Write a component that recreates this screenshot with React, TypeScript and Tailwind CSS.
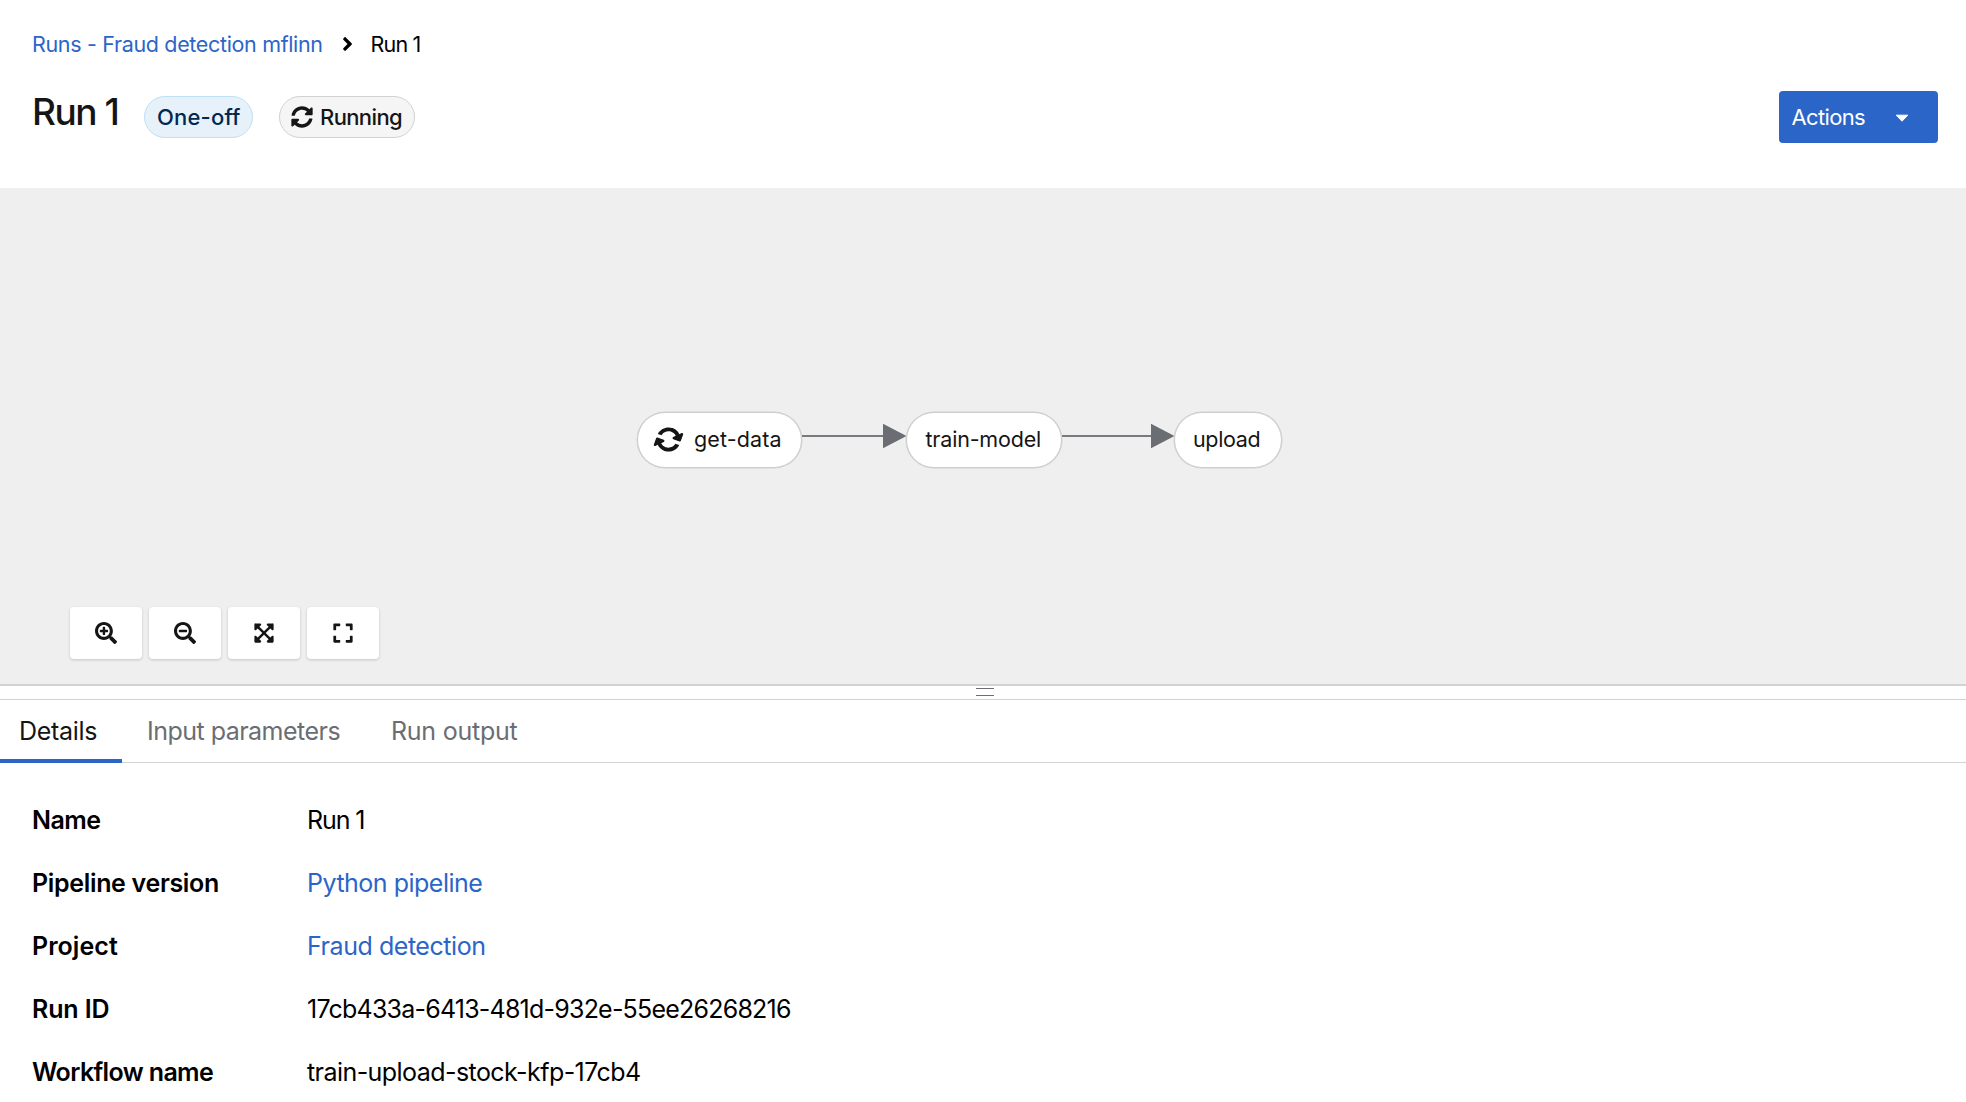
import type { ReactNode } from "react";
import { FaAngleRight, FaExpand, FaExpandArrowsAlt, FaSearchMinus, FaSearchPlus, FaSyncAlt } from "react-icons/fa";

function GraphNode({ className, children }: { className: string; children: ReactNode }) {
  return (
    <div className={`absolute top-[224px] flex h-[56px] items-center rounded-[28px] border border-[#cdcdcd] bg-white pb-[2px] text-[21.5px] whitespace-nowrap text-[#151515] shadow-[0_0_0_0.5px_#d2d2d2] ${className}`}>
      {children}
    </div>
  );
}

function Edge({ className, length }: { className: string; length: number }) {
  return (
    <svg className={`absolute top-[235px] h-[26px] ${className}`} viewBox={`0 0 ${length} 26`} fill="#6a6e73">
      <rect x="0" y="12.1" width={length - 20} height="1.8" />
      <path d={`M${length - 23.5} 0.7 L${length} 13 L${length - 23.5} 25.3 Z`} />
    </svg>
  );
}

function ToolButton({ label, children }: { label: string; children: ReactNode }) {
  return (
    <button aria-label={label} className="flex h-[52px] w-[72px] items-center justify-center rounded-[4px] bg-white text-[22px] text-[#151515] shadow-[0_1px_3px_rgba(3,3,3,0.18)]">
      {children}
    </button>
  );
}

function Row({ label, labelClass, value, valueClass }: { label: string; labelClass: string; value: string; valueClass: string }) {
  return (
    <div className="flex h-[63px] items-start">
      <dt className={`w-[275px] shrink-0 font-semibold ${labelClass}`}>{label}</dt>
      <dd className={`whitespace-nowrap ${valueClass}`}>{value}</dd>
    </div>
  );
}

export default function App() {
  return (
    <div className="flex h-[1102px] w-[1966px] flex-col overflow-hidden bg-white font-['Inter',sans-serif] text-black">
      <header className="flex h-[188px] shrink-0 flex-col pt-[30px] pr-[28px] pl-[32px]">
        <nav className="flex h-[28px] items-center text-[21.5px] leading-[28px] whitespace-nowrap">
          <a className="w-[309.5px] tracking-[-0.34px] text-[#2b65c8]">Runs - Fraud detection mflinn</a>
          <FaAngleRight className="h-[22px] w-[11px]" />
          <span className="ml-[18px] tracking-[-0.8px]">Run 1</span>
        </nav>
        <div className="mt-[29px] flex items-start">
          <h1 className="w-[112px] text-[37px] leading-[49px] font-medium tracking-[-1.46px] whitespace-nowrap text-[#151515]">Run 1</h1>
          <span className="mt-[9px] flex h-[42px] w-[109px] items-center rounded-full border border-[#bee1f4] bg-[#e7f1fa] pl-[12px] text-[22px] font-medium tracking-[0.18px] text-[#002952]">One-off</span>
          <span className="mt-[9px] ml-[26px] flex h-[42px] w-[136px] items-center rounded-full border border-[#d2d2d2] bg-[#f5f5f5] pl-[11px] text-[22px] font-medium tracking-[-0.62px] text-[#151515]">
            <FaSyncAlt className="mr-[7px] size-[22px] shrink-0" />
            Running
          </span>
          <button className="mt-[4px] ml-auto flex h-[52px] w-[159px] items-center justify-between rounded-[4px] bg-[#2b65c8] pr-[29px] pl-[12.5px] text-[22px] tracking-[-0.66px] text-white">
            Actions
            <svg className="mt-px h-[8px] w-[14px]" viewBox="0 0 14 8" fill="currentColor" stroke="currentColor" strokeLinejoin="round">
              <path d="M1.2 1.2 H12.8 L7 7.2 Z" />
            </svg>
          </button>
        </div>
      </header>

      <main className="relative flex h-[496px] shrink-0 items-end bg-[#efefef] pb-[25px] pl-[70px]">
        <Edge className="left-[802px] w-[104.5px]" length={104.5} />
        <Edge className="left-[1062px] w-[112.5px]" length={112.5} />
        <GraphNode className="left-[637px] w-[165px] pl-[18px] tracking-[0.12px]">
          <FaSyncAlt className="mr-[13px] size-[25px] rotate-[20deg]" />
          get-data
        </GraphNode>
        <GraphNode className="left-[906px] w-[156px] pl-[18.5px] tracking-[-0.19px]">train-model</GraphNode>
        <GraphNode className="left-[1174px] w-[108px] pl-[18px] tracking-[-0.35px]">upload</GraphNode>
        <div className="flex gap-[7px]">
          <ToolButton label="Zoom in"><FaSearchPlus /></ToolButton>
          <ToolButton label="Zoom out"><FaSearchMinus /></ToolButton>
          <ToolButton label="Fit to screen"><FaExpandArrowsAlt /></ToolButton>
          <ToolButton label="Reset view"><FaExpand /></ToolButton>
        </div>
      </main>

      <div className="flex h-[16px] shrink-0 justify-center border-t-2 border-b border-t-[#d2d2d2] border-b-[#d2d2d2] pt-[2px] pl-[4px]">
        <div className="h-[8px] w-[18px] border-y border-[#6a6e73]" />
      </div>

      <div className="flex h-[63px] shrink-0 border-b border-[#d2d2d2] text-[25px] leading-[32px] whitespace-nowrap text-[#6a6e73]">
        <div className="h-[63px] w-[122px] border-b-4 border-[#2b65c8] pt-[15px] pl-[19px] tracking-[-0.3px] text-[#151515]">Details</div>
        <div className="w-[268px] pt-[15px] pl-[25px] tracking-[-0.52px]">Input parameters</div>
        <div className="pt-[15px] pl-px tracking-[-0.25px]">Run output</div>
      </div>

      <dl className="pt-[41px] pl-[32px] text-[25px] leading-[32px]">
        <Row label="Name" labelClass="tracking-[-0.5px]" value="Run 1" valueClass="tracking-[-1.1px]" />
        <Row label="Pipeline version" labelClass="tracking-[-0.33px]" value="Python pipeline" valueClass="tracking-[-0.5px] text-[#2b65c8]" />
        <Row label="Project" labelClass="tracking-[0.05px]" value="Fraud detection" valueClass="tracking-[-0.45px] text-[#2b65c8]" />
        <Row label="Run ID" labelClass="tracking-[-0.13px]" value="17cb433a-6413-481d-932e-55ee26268216" valueClass="tracking-[-0.78px]" />
        <Row label="Workflow name" labelClass="tracking-[-0.63px]" value="train-upload-stock-kfp-17cb4" valueClass="tracking-[-0.56px]" />
      </dl>
    </div>
  );
}
